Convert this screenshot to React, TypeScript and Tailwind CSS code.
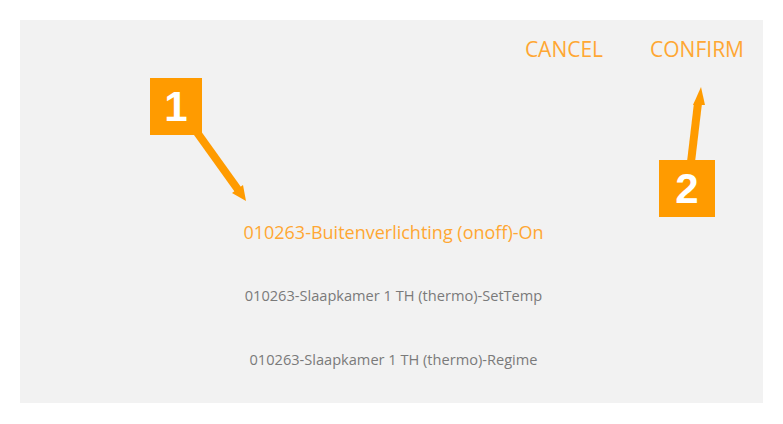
import React from "react";

const items = [
  { label: "010263-Buitenverlichting (onoff)-On", active: true },
  { label: "010263-Slaapkamer 1 TH (thermo)-SetTemp", active: false },
  { label: "010263-Slaapkamer 1 TH (thermo)-Regime", active: false },
];

function Badge({ n, className }: { n: string; className: string }) {
  return (
    <div
      className={`absolute flex items-center justify-center bg-[#ff9b00] text-white text-[42px] font-bold leading-none ${className}`}
      style={{ fontFamily: '"Liberation Sans", Arial, sans-serif' }}
    >
      {n}
    </div>
  );
}

export default function App() {
  return (
    <div
      className="relative w-[783px] h-[424px] bg-white pt-5 px-5"
      style={{ fontFamily: '"Open Sans", "Noto Sans", sans-serif' }}
    >
      <div className="h-[383px] bg-[#f2f2f2] flex flex-col">
        <div className="flex justify-end items-center h-[60px] pr-[19px] gap-[47px] text-[21px] text-[#ffa733]">
          <button className="uppercase">Cancel</button>
          <button className="uppercase">Confirm</button>
        </div>
        <div className="flex flex-col mt-[120px] pl-1">
          {items.map((it) => (
            <div
              key={it.label}
              className={`h-16 flex items-center justify-center ${
                it.active ? "text-[18px] text-[#ffa733]" : "text-[14.6px] text-[#7a7a7a]"
              }`}
            >
              {it.label}
            </div>
          ))}
        </div>
      </div>

      {/* annotation arrows */}
      <svg className="absolute inset-0 pointer-events-none" width="783" height="424">
        <line x1="196" y1="131" x2="239" y2="191" stroke="#ff9b00" strokeWidth="8" />
        <polygon points="232,193 243,185 246,201" fill="#ff9b00" />
        <line x1="691" y1="162" x2="698" y2="103" stroke="#ff9b00" strokeWidth="8" />
        <polygon points="693,105 705,105 701,87" fill="#ff9b00" />
      </svg>
      <Badge n="1" className="left-[150px] top-[78px] w-[52px] h-[57px]" />
      <Badge n="2" className="left-[659px] top-[160px] w-[56px] h-[57px]" />
    </div>
  );
}
